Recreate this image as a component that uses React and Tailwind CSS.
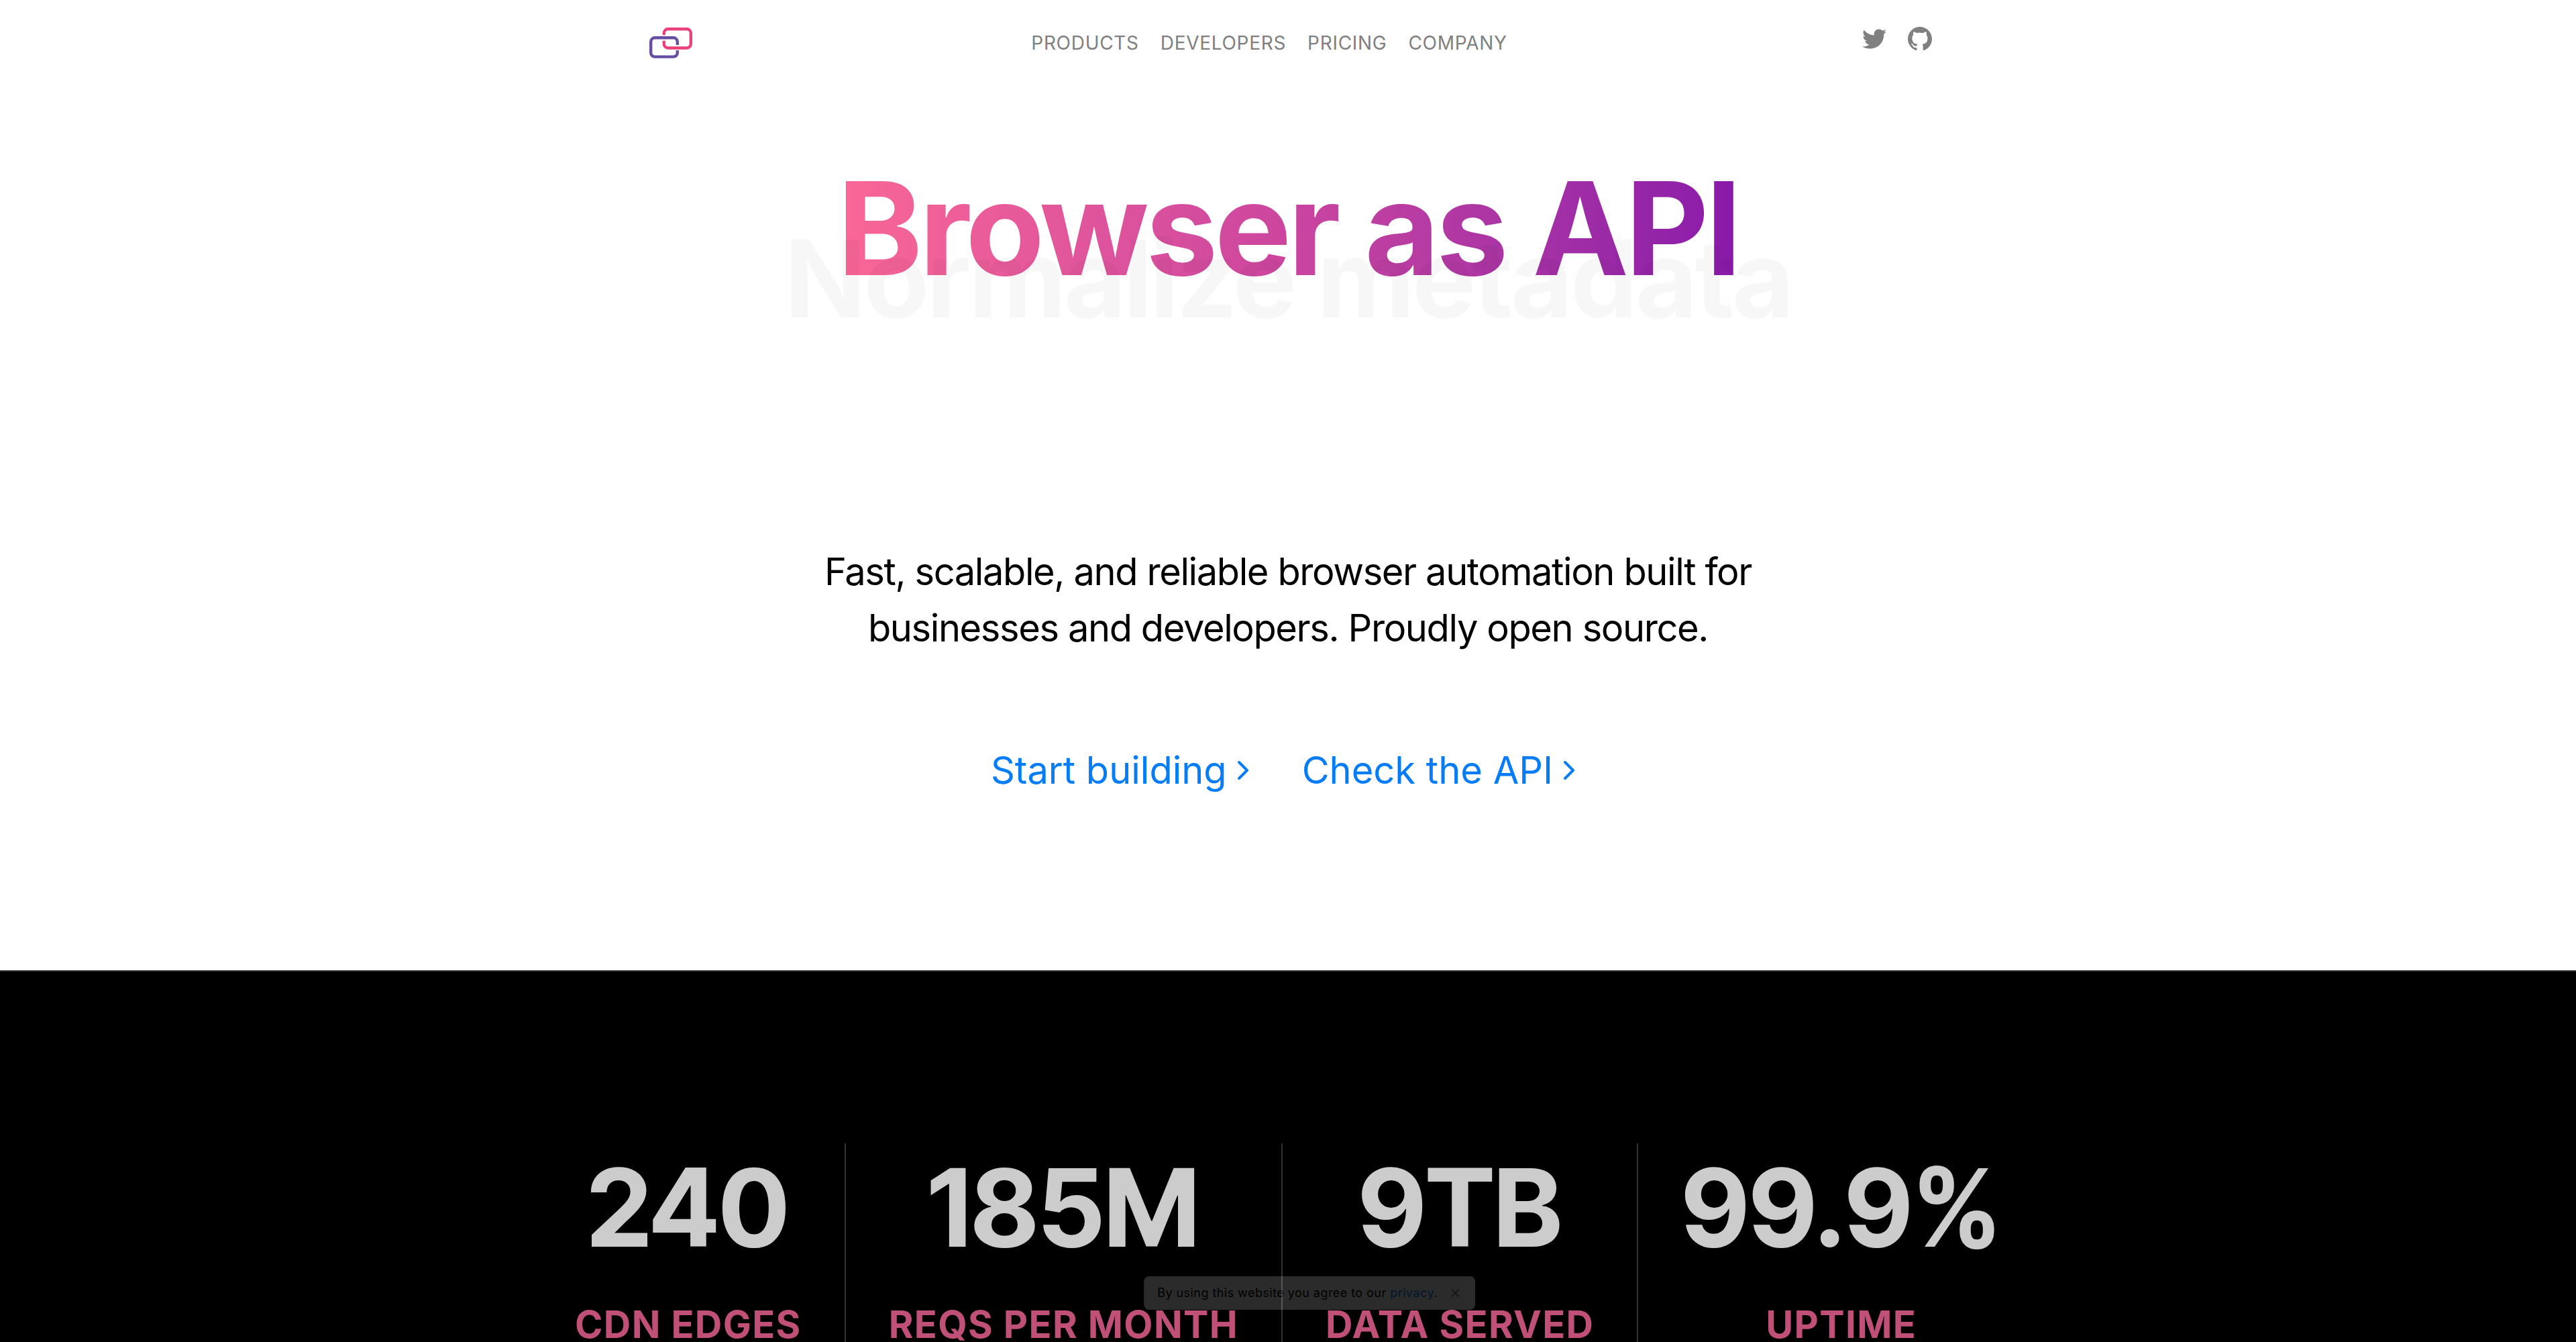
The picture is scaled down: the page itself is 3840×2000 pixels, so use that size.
import { FaTwitter } from "react-icons/fa";
import { VscGithubInverted } from "react-icons/vsc";

const navLinks = ["Products", "Developers", "Pricing", "Company"];

const stats = [
  { value: "240", label: "CDN Edges" },
  { value: "185M", label: "Reqs per month" },
  { value: "9TB", label: "Data served" },
  { value: "99.9%", label: "Uptime" },
];

function Logo() {
  return (
    <svg viewBox="0 0 64 46" className="w-16" fill="none" strokeWidth="4.4" aria-hidden="true">
      <path
        stroke="#EA407B"
        d="M21.8 11.3V8.2a6 6 0 0 1 6-6h28a6 6 0 0 1 6 6v16.3a6 6 0 0 1-6 6h-28a6 6 0 0 1-6-6v-4.8"
      />
      <path
        stroke="#654EA3"
        d="M41.8 26v-4.7a6 6 0 0 0-6-6H8.2a6 6 0 0 0-6 6v16.3a6 6 0 0 0 6 6h27.6a6 6 0 0 0 6-6V34"
      />
    </svg>
  );
}

function Chevron() {
  return (
    <svg
      viewBox="0 0 24 24"
      className="size-12"
      fill="none"
      stroke="currentColor"
      strokeWidth="2"
      strokeLinecap="round"
      strokeLinejoin="round"
      aria-hidden="true"
    >
      <polyline points="9 18 15 12 9 6" />
    </svg>
  );
}

function Header() {
  return (
    <header className="mx-auto flex h-32 w-full max-w-[1920px] items-center justify-between pl-2">
      <a href="#home" aria-label="Home">
        <Logo />
      </a>
      <nav className="flex gap-8 pr-6 text-[28px] leading-8 tracking-wide text-[#808080] uppercase">
        {navLinks.map((name) => (
          <a key={name} href={`#${name.toLowerCase()}`}>
            {name}
          </a>
        ))}
      </nav>
      <div className="flex items-center gap-8 pb-3 text-[36px] text-[#808080]">
        <a href="#twitter" aria-label="Twitter">
          <FaTwitter />
        </a>
        <a href="#github" aria-label="GitHub">
          <VscGithubInverted />
        </a>
      </div>
    </header>
  );
}

function Hero() {
  return (
    <section className="flex flex-col items-center px-8 pt-[116px] pb-64 text-center">
      <div className="relative">
        <h1 className="bg-linear-to-r from-[#fa6796] via-[#cb459f] to-[#8918a9] bg-clip-text text-[192px] leading-[192px] font-bold tracking-tight text-transparent">
          Browser as API
        </h1>
        <p className="pointer-events-none absolute top-[91px] left-1/2 -translate-x-1/2 text-[160px] leading-[160px] font-bold tracking-tight whitespace-nowrap text-black/3">
          Normalize metadata
        </p>
      </div>
      <p className="mt-[374px] max-w-[1408px] text-[56px] leading-[84px] tracking-tight text-black">
        Fast, scalable, and reliable browser automation built for businesses and developers. Proudly open source.
      </p>
      <div className="mt-32 flex gap-16 text-[56px] leading-[84px] text-[#067df7]">
        <a href="#start" className="flex items-center">
          Start building
          <Chevron />
        </a>
        <a href="#api" className="flex items-center">
          Check the API
          <Chevron />
        </a>
      </div>
    </section>
  );
}

function Stats() {
  return (
    <section className="flex grow justify-center border-t-2 border-[#333333] bg-black pt-64">
      <dl className="flex divide-x-2 divide-[#333333]">
        {stats.map(({ value, label }) => (
          <div key={label} className="flex flex-col-reverse items-center justify-end gap-[68px] px-16 pt-4 first:pl-0 last:pr-0">
            <dt className="text-[56px] leading-[52px] font-bold tracking-wide text-[#c15078] uppercase">{label}</dt>
            <dd className="font-['Inter_Tight','Inter',sans-serif] text-[160px] leading-[160px] font-bold text-[#cccccc]">
              {value}
            </dd>
          </div>
        ))}
      </dl>
    </section>
  );
}

function CookieNotice() {
  return (
    <div className="fixed bottom-12 left-1/2 ml-8 flex -translate-x-1/2 items-center gap-4 rounded-lg bg-white px-5 py-3 text-[18px] leading-[26px] tracking-wide whitespace-nowrap text-black opacity-17">
      <p>
        By using this website you agree to our{" "}
        <a href="#privacy" className="text-[#067df7]">
          privacy
        </a>
        .
      </p>
      <button type="button" aria-label="Close" className="p-1">
        <svg viewBox="0 0 12 12" className="size-3" stroke="#666666" strokeWidth="1.5" aria-hidden="true">
          <path d="M0.5 0.5l11 11M11.5 0.5l-11 11" />
        </svg>
      </button>
    </div>
  );
}

export default function App() {
  return (
    <div className="flex min-h-screen flex-col bg-white font-['Inter',sans-serif]">
      <Header />
      <Hero />
      <Stats />
      <CookieNotice />
    </div>
  );
}
